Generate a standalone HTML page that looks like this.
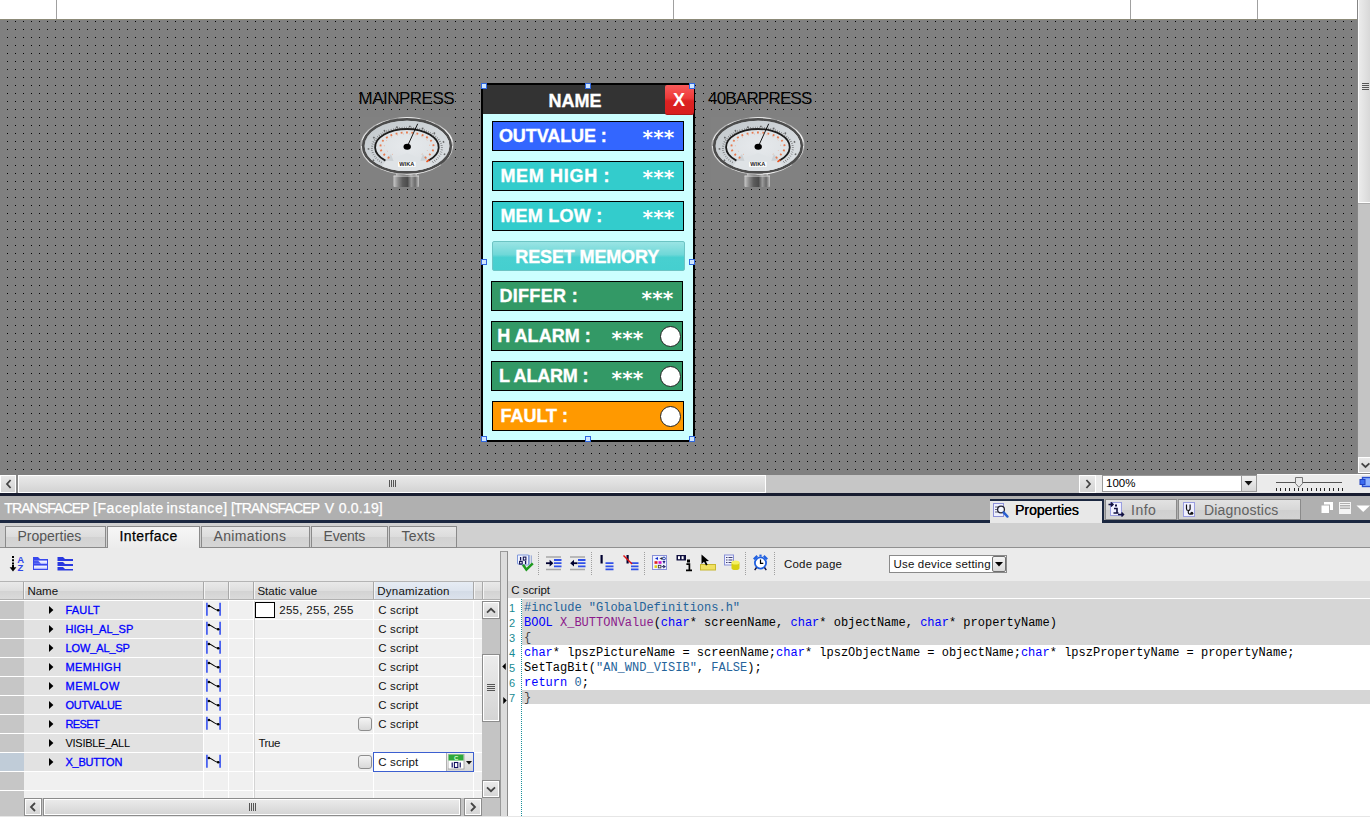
<!DOCTYPE html>
<html><head><meta charset="utf-8"><title>TRANSFACEP</title>
<style>
*{box-sizing:border-box;margin:0;padding:0}
html,body{width:1370px;height:817px;overflow:hidden;background:#fff;font-family:"Liberation Sans",sans-serif;font-size:12px;color:#000}
.a{position:absolute}
#top{left:0;top:0;width:1370px;height:20px;background:#fff}
#top i{position:absolute;top:0;width:1px;height:19px;background:#a0a0a0}
#canvas{left:0;top:20px;width:1357px;height:455px;background-color:#000;
 background-image:linear-gradient(90deg,#808080 7px,rgba(0,0,0,0) 7px),linear-gradient(180deg,#808080 7px,rgba(0,0,0,0) 7px);background-size:8px 8px;background-position:0 2px}
#vsb{left:1357px;top:0;width:13px;height:475px;background:#c8c8c8}
#hsb{left:0;top:475px;width:1370px;height:18px;background:#c6c6c6}
#navy1{left:0;top:493px;width:1370px;height:3px;background:#181d30}
#titlebar{left:0;top:496px;width:1370px;height:24px;background:#b0b0b0;color:#fff;font-size:14px;line-height:24px;white-space:nowrap}
#navy2{left:0;top:520px;width:1370px;height:3px;background:#1b2740}
#tabstrip{left:0;top:523px;width:1370px;height:25px;background:#d0d0d0;border-bottom:1px solid #909090}
#lower{left:0;top:548px;width:1370px;height:269px;background:#ebebeb}

.lbl{font-size:17px;line-height:20px;color:#000;white-space:nowrap}
#fp{left:481px;top:83px;width:214px;height:359px;background:#ccffff;border:2px solid #000}
#fpt{-webkit-text-stroke:0.35px #fff;left:0;top:0;width:210px;height:29px;background:#333;color:#fff;font-weight:bold;font-size:18px;line-height:28px;text-align:center}
#xb{left:182px;top:0;width:29px;height:29px;text-indent:-1px;border-radius:2px;background:linear-gradient(180deg,#f85a5a 0%,#ee3a3a 45%,#dc2222 55%,#d81f1f 100%);color:#fff;font-weight:bold;font-size:18px;line-height:30px;text-align:center;box-shadow:0 1px 0 #b01818}
.row{left:9px;width:192px;height:30px;border:1px solid #000;color:#fff;font-weight:bold;font-size:18px;line-height:29px;white-space:nowrap}
.row span{position:absolute;top:0;-webkit-text-stroke:0.35px #fff}
.row span.st{-webkit-text-stroke:0;font-family:"DejaVu Sans",sans-serif;font-size:20px;letter-spacing:0.2px;line-height:28px;top:2px;margin-left:-0.5px}
.lamp{position:absolute;width:21px;height:21px;border-radius:50%;background:#fff;border:1px solid #222;top:4px;margin-left:-1px}
.h{position:absolute;width:6px;height:6px;background:#cfe6ff;border:1px solid #3068e0}

.sbb{position:absolute;border:1px solid #fff;background:linear-gradient(180deg,#e9e9e9,#d3d3d3)}
.tab{position:absolute;top:3px;height:22px;border:1px solid #8a8a8a;background:linear-gradient(180deg,#e6e6e6 0%,#dcdcdc 50%,#d2d2d2 51%,#d6d6d6 100%);color:#555;font-size:14px;line-height:19px;text-align:left;padding-left:11.5px;white-space:nowrap}
.tab.on{background:linear-gradient(180deg,#f6f6f6,#ebebeb);color:#000;height:23px;border-bottom:none;font-weight:normal}

.rtab{position:absolute;top:3px;height:21px;border:1px solid #8a8a8a;background:linear-gradient(180deg,#e2e2e2 0%,#d8d8d8 50%,#cfcfcf 51%,#d3d3d3 100%);color:#606060;font-size:14px;line-height:19px;white-space:nowrap}
.rtab span,.ptab span{position:absolute;top:0}
.ptab{z-index:5;position:absolute;left:990px;top:3px;width:114px;height:24px;background:#e8e8e8;border-top:2px solid #1b2740;border-right:2px solid #1b2740;color:#000;font-size:14px;line-height:20px;white-space:nowrap}
#ttl b{position:absolute;top:0;font-weight:normal;-webkit-text-stroke:0.25px #fff}

.hd{background:linear-gradient(180deg,#e9e9e9 0%,#dedede 50%,#d3d3d3 55%,#dadada 100%)}
.ht{top:35px;font-size:11.5px;line-height:17px;white-space:nowrap;color:#111}
.nm{font-size:11px;line-height:18px;white-space:nowrap}
.nm.b{-webkit-text-stroke:0.3px #0000ff}
.cs{font-size:11.5px;line-height:18px;white-space:nowrap;color:#111;letter-spacing:0.15px}
.sb2{border:1px solid #8c8c8c;box-shadow:inset 0 0 0 1px #fff;background:linear-gradient(180deg,#ececec,#d4d4d4)}

.ln{font-size:11px;line-height:15px;color:#178a92;white-space:pre}
.cd{font-family:"Liberation Mono",monospace;font-size:12px;line-height:15px;color:#000;white-space:pre}
.cd i{font-style:normal}
.cd .k{color:#0000ff}.cd .s{color:#25639a}.cd .f{color:#8b1a8b}.cd .g{color:#444}
</style></head><body>
<div id="top" class="a"><i style="left:56px"></i><i style="left:673px"></i><i style="left:1130px"></i><i style="left:1257px"></i><i style="left:1357px"></i><div class="a" style="left:0;top:19px;width:1358px;height:1px;background:#8c8a78"></div></div>
<div id="canvas" class="a"></div>

<div class="a lbl" id="l1" style="left:358.5px;top:89px;letter-spacing:-0.5px">MAINPRESS</div>
<div class="a lbl" id="l2" style="left:708px;top:89px;letter-spacing:-0.8px">40BARPRESS</div>
<svg class="a" style="left:360px;top:117px" width="94" height="71" viewBox="0 0 94 71">
<defs>
<linearGradient id="rim1" x1="0" y1="0" x2="1" y2="0.55"><stop offset="0" stop-color="#9c9c9c"/><stop offset="0.1" stop-color="#f6f6f6"/><stop offset="0.24" stop-color="#8c8c8c"/><stop offset="0.42" stop-color="#e4e4e4"/><stop offset="0.58" stop-color="#7e7e7e"/><stop offset="0.78" stop-color="#dedede"/><stop offset="0.9" stop-color="#f0f0f0"/><stop offset="1" stop-color="#8a8a8a"/></linearGradient>
<linearGradient id="ring1" x1="0" y1="0" x2="1" y2="1"><stop offset="0" stop-color="#c2c8cc"/><stop offset="0.5" stop-color="#d0d5d9"/><stop offset="1" stop-color="#dde1e4"/></linearGradient>
<radialGradient id="face1" cx="0.5" cy="0.5" r="0.6"><stop offset="0" stop-color="#e6e9ec"/><stop offset="1" stop-color="#dce0e3"/></radialGradient>
<linearGradient id="stem1" x1="0" y1="0" x2="1" y2="0"><stop offset="0" stop-color="#c8c8c8"/><stop offset="0.18" stop-color="#8a8a8a"/><stop offset="0.36" stop-color="#5c5c5c"/><stop offset="0.55" stop-color="#4c4c4c"/><stop offset="0.7" stop-color="#9a9a9a"/><stop offset="0.85" stop-color="#6a6a6a"/><stop offset="1" stop-color="#c4c4c4"/></linearGradient>
<clipPath id="fc1"><ellipse cx="47" cy="28.9" rx="42.4" ry="25.2"/></clipPath>
</defs>
<rect width="94" height="71" fill="#818181"/>
<rect x="36" y="54" width="21" height="5" fill="url(#stem1)"/>
<rect x="33.5" y="58.5" width="25.5" height="11.5" rx="1" fill="url(#stem1)"/>
<rect x="33.5" y="58.5" width="25.5" height="1.2" fill="#d4d4d4" opacity="0.8"/>
<ellipse cx="47" cy="28.9" rx="46.7" ry="28.9" fill="url(#rim1)"/>
<ellipse cx="47" cy="28.9" rx="45.6" ry="28" fill="none" stroke="#fff" stroke-width="1" stroke-dasharray="14 9 22 6 9 12" opacity="0.75"/>
<ellipse cx="47" cy="28.9" rx="43.8" ry="26.5" fill="none" stroke="#4c4c4c" stroke-width="2.6"/>
<ellipse cx="47" cy="28.9" rx="42.4" ry="25.2" fill="url(#ring1)"/>
<g clip-path="url(#fc1)">
<ellipse cx="46.9" cy="28.8" rx="31.8" ry="18.2" fill="url(#face1)"/>
<path d="M46.9,36 L25,44.5 L18,56 L76,56 L69,44.5 Z" fill="#dfe3e6"/>
<path d="M25.4,43.6 L33.5,44 L31,37 Z M68.4,43.6 L60.3,44 L62.8,37 Z" fill="#cdd2d6"/>
</g>
<path d="M21.6,45.5 A35,20.6 0 1 1 72.2,45.5" fill="none" stroke="#2c2c2c" stroke-width="2" stroke-dasharray="0.45 1.75" opacity="0.8"/>
<path d="M14,44 A38.5,22.8 0 1 1 80,44" fill="none" stroke="#3a3a3a" stroke-width="1.6" stroke-dasharray="1.6 11.2" opacity="0.7"/>
<path d="M25.4,43.6 A31.8,18.2 0 1 1 68.4,43.6" fill="none" stroke="#1c1c1c" stroke-width="1.8"/>
<path d="M29.4,41 A26.6,14.6 0 1 1 64.6,41" fill="none" stroke="#e8622c" stroke-width="1.9" stroke-dasharray="1.8 3.4" opacity="0.8"/>
<path d="M32.8,37.5 A22.6,11.6 0 1 1 61.2,37.5" fill="none" stroke="#ee8a5c" stroke-width="1" stroke-dasharray="0.8 5.3" opacity="0.6"/>
<path d="M66.5,44.8 L69.4,42.6" stroke="#e8501c" stroke-width="1.6"/>
<path d="M38,11.8h18" stroke="#555" stroke-width="0.5" stroke-dasharray="1 0.6" opacity="0.7"/>
<line x1="47.3" y1="29.5" x2="57.7" y2="6.8" stroke="#000" stroke-width="0.9"/>
<ellipse cx="47.2" cy="29.8" rx="3.7" ry="3" fill="#000"/>
<rect x="38" y="44.8" width="17.6" height="5" fill="#fff"/>
<text x="46.8" y="49.2" font-family="Liberation Sans, sans-serif" font-weight="bold" font-size="5.2" text-anchor="middle" fill="#222" textLength="15" lengthAdjust="spacingAndGlyphs">WIKA</text>
</svg>
<svg class="a" style="left:711px;top:117px" width="94" height="71" viewBox="0 0 94 71">
<defs>
<linearGradient id="rim2" x1="0" y1="0" x2="1" y2="0.55"><stop offset="0" stop-color="#9c9c9c"/><stop offset="0.1" stop-color="#f6f6f6"/><stop offset="0.24" stop-color="#8c8c8c"/><stop offset="0.42" stop-color="#e4e4e4"/><stop offset="0.58" stop-color="#7e7e7e"/><stop offset="0.78" stop-color="#dedede"/><stop offset="0.9" stop-color="#f0f0f0"/><stop offset="1" stop-color="#8a8a8a"/></linearGradient>
<linearGradient id="ring2" x1="0" y1="0" x2="1" y2="1"><stop offset="0" stop-color="#c2c8cc"/><stop offset="0.5" stop-color="#d0d5d9"/><stop offset="1" stop-color="#dde1e4"/></linearGradient>
<radialGradient id="face2" cx="0.5" cy="0.5" r="0.6"><stop offset="0" stop-color="#e6e9ec"/><stop offset="1" stop-color="#dce0e3"/></radialGradient>
<linearGradient id="stem2" x1="0" y1="0" x2="1" y2="0"><stop offset="0" stop-color="#c8c8c8"/><stop offset="0.18" stop-color="#8a8a8a"/><stop offset="0.36" stop-color="#5c5c5c"/><stop offset="0.55" stop-color="#4c4c4c"/><stop offset="0.7" stop-color="#9a9a9a"/><stop offset="0.85" stop-color="#6a6a6a"/><stop offset="1" stop-color="#c4c4c4"/></linearGradient>
<clipPath id="fc2"><ellipse cx="47" cy="28.9" rx="42.4" ry="25.2"/></clipPath>
</defs>
<rect width="94" height="71" fill="#818181"/>
<rect x="36" y="54" width="21" height="5" fill="url(#stem2)"/>
<rect x="33.5" y="58.5" width="25.5" height="11.5" rx="1" fill="url(#stem2)"/>
<rect x="33.5" y="58.5" width="25.5" height="1.2" fill="#d4d4d4" opacity="0.8"/>
<ellipse cx="47" cy="28.9" rx="46.7" ry="28.9" fill="url(#rim2)"/>
<ellipse cx="47" cy="28.9" rx="45.6" ry="28" fill="none" stroke="#fff" stroke-width="1" stroke-dasharray="14 9 22 6 9 12" opacity="0.75"/>
<ellipse cx="47" cy="28.9" rx="43.8" ry="26.5" fill="none" stroke="#4c4c4c" stroke-width="2.6"/>
<ellipse cx="47" cy="28.9" rx="42.4" ry="25.2" fill="url(#ring2)"/>
<g clip-path="url(#fc2)">
<ellipse cx="46.9" cy="28.8" rx="31.8" ry="18.2" fill="url(#face2)"/>
<path d="M46.9,36 L25,44.5 L18,56 L76,56 L69,44.5 Z" fill="#dfe3e6"/>
<path d="M25.4,43.6 L33.5,44 L31,37 Z M68.4,43.6 L60.3,44 L62.8,37 Z" fill="#cdd2d6"/>
</g>
<path d="M21.6,45.5 A35,20.6 0 1 1 72.2,45.5" fill="none" stroke="#2c2c2c" stroke-width="2" stroke-dasharray="0.45 1.75" opacity="0.8"/>
<path d="M14,44 A38.5,22.8 0 1 1 80,44" fill="none" stroke="#3a3a3a" stroke-width="1.6" stroke-dasharray="1.6 11.2" opacity="0.7"/>
<path d="M25.4,43.6 A31.8,18.2 0 1 1 68.4,43.6" fill="none" stroke="#1c1c1c" stroke-width="1.8"/>
<path d="M29.4,41 A26.6,14.6 0 1 1 64.6,41" fill="none" stroke="#e8622c" stroke-width="1.9" stroke-dasharray="1.8 3.4" opacity="0.8"/>
<path d="M32.8,37.5 A22.6,11.6 0 1 1 61.2,37.5" fill="none" stroke="#ee8a5c" stroke-width="1" stroke-dasharray="0.8 5.3" opacity="0.6"/>
<path d="M66.5,44.8 L69.4,42.6" stroke="#e8501c" stroke-width="1.6"/>
<path d="M38,11.8h18" stroke="#555" stroke-width="0.5" stroke-dasharray="1 0.6" opacity="0.7"/>
<line x1="47.3" y1="29.5" x2="57.7" y2="6.8" stroke="#000" stroke-width="0.9"/>
<ellipse cx="47.2" cy="29.8" rx="3.7" ry="3" fill="#000"/>
<rect x="38" y="44.8" width="17.6" height="5" fill="#fff"/>
<text x="46.8" y="49.2" font-family="Liberation Sans, sans-serif" font-weight="bold" font-size="5.2" text-anchor="middle" fill="#222" textLength="15" lengthAdjust="spacingAndGlyphs">WIKA</text>
</svg>
<div id="fp" class="a">
 <div id="fpt" class="a"><span style="position:relative;left:-13px;top:2px;letter-spacing:0px">NAME</span></div>
 <div id="xb" class="a">X</div>
 <div class="a row" style="top:36px;background:#3366ff"><span style="left:5.9px;letter-spacing:-0.08px">OUTVALUE :</span><span class="st" style="left:150px;top:1px">***</span></div>
 <div class="a row" style="top:76px;background:#33cccc"><span style="left:7.4px;letter-spacing:0.68px">MEM HIGH :</span><span class="st" style="left:150px;top:1px">***</span></div>
 <div class="a row" style="top:116px;background:#33cccc"><span style="left:7.4px;letter-spacing:0.24px">MEM LOW :</span><span class="st" style="left:150px;top:1px">***</span></div>
 <div class="a" id="rst" style="left:9px;top:156px;width:193px;height:30px;border-radius:2px;border:1px solid #6cc4c4;background:linear-gradient(180deg,#9ae4e4 0%,#6fd8d8 45%,#48d0d0 55%,#45cfcf 100%);color:#fff;font-weight:bold;font-size:18px;line-height:29px;text-align:center;text-indent:-2.6px;letter-spacing:-0.14px;padding-top:1px;-webkit-text-stroke:0.35px #fff">RESET MEMORY</div>
 <div class="a row" style="left:8px;top:196px;background:#339966"><span style="left:7.4px;letter-spacing:0.32px">DIFFER :</span><span class="st" style="left:150px">***</span></div>
 <div class="a row" style="left:8px;top:236px;background:#339966"><span style="left:5.2px;letter-spacing:0.03px">H ALARM :</span><span class="st" style="left:120px">***</span><i class="lamp" style="left:169px"></i></div>
 <div class="a row" style="left:8px;top:276px;background:#339966"><span style="left:7px;letter-spacing:-0.19px">L ALARM :</span><span class="st" style="left:120px">***</span><i class="lamp" style="left:169px"></i></div>
 <div class="a row" style="top:316px;background:#ff9900"><span style="left:7.5px;letter-spacing:-0.03px">FAULT :</span><i class="lamp" style="left:168px"></i></div>
</div>
<i class="h" style="left:481px;top:83px"></i><i class="h" style="left:585px;top:83px"></i><i class="h" style="left:689px;top:83px"></i>
<i class="h" style="left:481px;top:259px"></i><i class="h" style="left:689px;top:259px"></i>
<i class="h" style="left:481px;top:436px"></i><i class="h" style="left:585px;top:436px"></i><i class="h" style="left:689px;top:436px"></i>
<div id="vsb" class="a">
 <div class="a" style="left:0;top:0;width:1px;height:474px;background:#858585"></div>
 <div class="a" style="left:1px;top:0;width:12px;height:203px;border-left:1px solid #fff;border-bottom:1px solid #fff;background:linear-gradient(90deg,#ebebeb,#d8d8d8)"></div>
 <div class="a" style="left:5px;top:83px;width:7px;height:8px;background:repeating-linear-gradient(180deg,#555 0,#555 1px,rgba(0,0,0,0) 1px,rgba(0,0,0,0) 2px)"></div>
 <div class="a" style="left:1px;top:203px;width:12px;height:1px;background:#aaa"></div>
 <div class="a" style="left:1px;top:204px;width:12px;height:253px;background:#c4c4c4"></div>
 <div class="a" style="left:1px;top:457px;width:12px;height:16px;border:1px solid #fff;border-right:none;background:linear-gradient(180deg,#e9e9e9,#d6d6d6)"></div>
 <svg class="a" style="left:4px;top:462px" width="9" height="7" viewBox="0 0 9 7"><path d="M0.6,1.4 L4.5,5 L8.4,1.4" fill="none" stroke="#444" stroke-width="1.8"/></svg>
 <div class="a" style="left:0;top:473px;width:13px;height:1px;background:#888"></div>
 <div class="a" style="left:0;top:474px;width:13px;height:1px;background:#fff"></div>
</div>
<div id="hsb" class="a">
 <div class="sbb" style="left:0;top:0;width:16px;height:18px"></div>
 <svg class="a" style="left:5px;top:4px" width="8" height="10" viewBox="0 0 8 10"><path d="M5.6,1 L2,5 L5.6,9" fill="none" stroke="#444" stroke-width="1.8"/></svg>
 <div class="a" style="left:16px;top:0;width:2px;height:18px;background:#8a8a8a"></div>
 <div class="sbb" style="left:18px;top:0;width:748px;height:18px"></div>
 <div class="a" style="left:389px;top:5px;width:7px;height:7px;background:repeating-linear-gradient(90deg,#555 0,#555 1px,rgba(0,0,0,0) 1px,rgba(0,0,0,0) 2px)"></div>
 <div class="sbb" style="left:1079px;top:0;width:17px;height:18px"></div>
 <svg class="a" style="left:1084px;top:4px" width="8" height="10" viewBox="0 0 8 10"><path d="M2.4,1 L6,5 L2.4,9" fill="none" stroke="#444" stroke-width="1.8"/></svg>
 <div class="a" style="left:1096px;top:0;width:274px;height:18px;background:#ebebeb"></div>
 <div class="a" style="left:1257px;top:-1px;width:100px;height:19px;background:#ebebeb;border-top:1px solid #fafafa"></div>
 <div class="a" style="left:1102px;top:0;width:155px;height:17px;background:#fff;border:1px solid #9a9a9a;font-size:11.5px;line-height:15px;padding-left:3px">100%</div>
 <div class="a" style="left:1241px;top:1px;width:15px;height:15px;background:linear-gradient(180deg,#f2f2f2,#d6d6d6);border-left:1px solid #9a9a9a"></div>
 <svg class="a" style="left:1244px;top:6px" width="9" height="5" viewBox="0 0 9 5"><path d="M0.5,0 L8.5,0 L4.5,4.6 Z" fill="#111"/></svg>
 <div class="a" style="left:1276px;top:7px;width:66px;height:1px;background:#555"></div>
 <div class="a" style="left:1276px;top:13px;width:67px;height:3px;background:repeating-linear-gradient(90deg,#222 0,#222 1px,rgba(0,0,0,0) 1px,rgba(0,0,0,0) 4.4px)"></div>
 <svg class="a" style="left:1295px;top:2px" width="8" height="11" viewBox="0 0 8 11"><path d="M0.5,0.5 L7.5,0.5 L7.5,6.5 L4,10.3 L0.5,6.5 Z" fill="#e8e8e8" stroke="#777" stroke-width="1"/></svg>
 <svg class="a" style="left:1359px;top:1px" width="12" height="12" viewBox="0 0 12 12"><rect x="3.5" y="1.5" width="9" height="9" fill="#8fb4ff" stroke="#2a4fd0" stroke-width="1.4"/><rect x="1" y="3.5" width="5" height="5" fill="#3c6cf0" stroke="#2040c0" stroke-width="1"/></svg>
</div>
<div id="navy1" class="a"></div>
<div id="titlebar" class="a"><span id="ttl" class="a" style="left:0;top:0"><b style="left:4.3px;letter-spacing:-0.9px">TRANSFACEP</b><b style="left:93px;letter-spacing:0.55px">[Faceplate</b><b style="left:166.4px;letter-spacing:0.59px">instance]</b><b style="left:231px;letter-spacing:-0.82px">[TRANSFACEP</b><b style="left:324.7px">V</b><b style="left:338.7px;letter-spacing:0.21px">0.0.19]</b></span>
 <div class="ptab"><span id="tprop" style="left:25px;top:0;line-height:19px;text-shadow:0.2px 0 0 #000">Properties</span>
  <svg class="a" style="left:3px;top:2px" width="17" height="16" viewBox="0 0 17 16"><rect x="0.5" y="0.5" width="10" height="13" fill="#eef0ff" stroke="#8c90d8"/><path d="M2,4h3M2,6.5h2.5M2,9h3" stroke="#667" stroke-width="1"/><circle cx="8" cy="6.5" r="3.4" fill="#f4f7ff" stroke="#223" stroke-width="1.3"/><path d="M10.6,9.4 L14.5,13.6" stroke="#2a5fd0" stroke-width="2.4" stroke-linecap="round"/></svg>
 </div>
 <div class="rtab" style="left:1105px;width:72px"><span id="tinfo" style="left:25px;top:1px;letter-spacing:0.5px">Info</span>
  <svg class="a" style="left:2px;top:1px" width="17" height="17" viewBox="0 0 17 17"><rect x="2.5" y="1.5" width="11" height="13" fill="#f0f0ff" stroke="#9a9ee0"/><path d="M0.5,3.5h4M3,1.5l2,2l-2,2" fill="none" stroke="#101040" stroke-width="1.5"/><path d="M10,13.5h5M13.5,11.5l2,2l-2,2" fill="none" stroke="#101040" stroke-width="1.5"/><rect x="7" y="3.5" width="2" height="2" fill="#101040"/><path d="M6,7.5h3v4.5M5.5,12h5" fill="none" stroke="#101040" stroke-width="1.6"/></svg>
 </div>
 <div class="rtab" style="left:1178px;width:123px"><span id="tdiag" style="left:25px;top:1px;letter-spacing:0.2px">Diagnostics</span>
  <svg class="a" style="left:4px;top:2px" width="13" height="16" viewBox="0 0 13 16"><rect x="0.5" y="0.5" width="11" height="14" fill="#f0f0ff" stroke="#9a9ee0"/><path d="M3.5,2.5v4.2a1.8,1.8 0 0 0 3.6,0v-4.2" fill="none" stroke="#111" stroke-width="1.2"/><path d="M5.3,8.6v2a1.6,1.6 0 0 0 2.6,1.2" fill="none" stroke="#111" stroke-width="1.2"/><circle cx="8.8" cy="11.2" r="1.5" fill="#111"/></svg>
 </div>
 <svg class="a" style="left:1321px;top:6px" width="12" height="12" viewBox="0 0 12 12"><rect x="3" y="0" width="9" height="8" fill="#fff"/><rect x="0" y="3" width="8.5" height="8.5" fill="#fff" stroke="#b0b0b0" stroke-width="1"/></svg>
 <svg class="a" style="left:1339px;top:6px" width="12" height="12" viewBox="0 0 12 12"><rect x="0.5" y="0.5" width="11" height="11" fill="none" stroke="#f4f4f4"/><path d="M1,2.5h10M1,5h10M1,7.5h10" stroke="#f4f4f4" stroke-width="1"/><rect x="1" y="8" width="10" height="3" fill="#f4f4f4"/></svg>
 <svg class="a" style="left:1356px;top:9px" width="14" height="8" viewBox="0 0 14 8"><path d="M0.5,0.5 L14,0.5 L7.2,7 Z" fill="#fff"/></svg>
</div>
<div id="navy2" class="a"></div>
<div id="tabstrip" class="a">
 <div class="tab" style="left:5px;width:101px"><span id="t1">Properties</span></div>
 <div class="tab on" style="left:107px;width:93px"><span id="t2" style="letter-spacing:0.4px;-webkit-text-stroke:0.25px #000">Interface</span></div>
 <div class="tab" style="left:201px;width:109px"><span id="t3" style="letter-spacing:0.35px">Animations</span></div>
 <div class="tab" style="left:311px;width:77px"><span id="t4" style="letter-spacing:-0.2px">Events</span></div>
 <div class="tab" style="left:389px;width:68px"><span id="t5" style="letter-spacing:0.2px">Texts</span></div>
</div>
<div id="lower" class="a"></div>
<!--LEFT-->
<div id="ltb" class="a" style="left:0;top:548px;width:500px;height:269px;background:#ebebeb">
<svg class="a" style="left:9px;top:7px" width="18" height="18" viewBox="0 0 18 18"><path d="M4,1v2M4,4.2v2M4,7.4v2" stroke="#000" stroke-width="2"/><path d="M4,10v4" stroke="#000" stroke-width="2"/><path d="M0.6,12.2 L4,16.6 L7.4,12.2 Z" fill="#000"/><text x="8.3" y="8" font-family="Liberation Sans, sans-serif" font-weight="bold" font-size="9.5" fill="#3048e8">A</text><text x="8.6" y="16.2" font-family="Liberation Sans, sans-serif" font-weight="bold" font-size="9.5" fill="#3048e8">Z</text></svg>
<svg class="a" style="left:32px;top:8px" width="17" height="15" viewBox="0 0 17 15"><defs><linearGradient id="fg" x1="0" y1="0" x2="0" y2="1"><stop offset="0" stop-color="#fff"/><stop offset="1" stop-color="#c8d0ff"/></linearGradient></defs><path d="M1,1h5l2,2h8v11h-15z" fill="#3848ee"/><rect x="2" y="4.6" width="13" height="3.2" fill="url(#fg)"/><rect x="2" y="9.6" width="13" height="3.2" fill="url(#fg)"/><path d="M2,4.6h4l3,3.2h-7z" fill="#4858f0"/></svg>
<svg class="a" style="left:57px;top:8px" width="17" height="15" viewBox="0 0 17 15"><path d="M0.5,1h5.5l2,2h8v2h-15.5z M0.5,6h5.5l2,2h8v2h-15.5z M0.5,11h5.5l2,2h8v1.6h-15.5z" fill="#2838e0"/></svg>
<div class="a" style="left:0;top:33px;width:500px;height:1px;background:#b4b4b4"></div>
<div class="a hd" style="left:0;top:34px;width:500px;height:17px"></div>
<div class="a" style="left:0;top:51px;width:500px;height:1px;background:#b0b0b0"></div>
<div class="a" style="left:0;top:52px;width:500px;height:1px;background:#fff"></div>
<div class="a" style="left:374px;top:34px;width:99px;height:17px;background:linear-gradient(180deg,#e6ecf4 0%,#dde4ee 50%,#d3dbe6 51%,#dbe2ec 100%)"></div>
<div class="a" style="left:23px;top:34px;width:1px;height:17px;background:#a8a8a8"></div><div class="a" style="left:24px;top:34px;width:1px;height:17px;background:#f4f4f4"></div>
<div class="a" style="left:203px;top:34px;width:1px;height:17px;background:#a8a8a8"></div><div class="a" style="left:204px;top:34px;width:1px;height:17px;background:#f4f4f4"></div>
<div class="a" style="left:228px;top:34px;width:1px;height:17px;background:#a8a8a8"></div><div class="a" style="left:229px;top:34px;width:1px;height:17px;background:#f4f4f4"></div>
<div class="a" style="left:253px;top:34px;width:1px;height:17px;background:#a8a8a8"></div><div class="a" style="left:254px;top:34px;width:1px;height:17px;background:#f4f4f4"></div>
<div class="a" style="left:373px;top:34px;width:1px;height:17px;background:#a8a8a8"></div><div class="a" style="left:374px;top:34px;width:1px;height:17px;background:#f4f4f4"></div>
<div class="a" style="left:473px;top:34px;width:1px;height:17px;background:#a8a8a8"></div><div class="a" style="left:474px;top:34px;width:1px;height:17px;background:#f4f4f4"></div>
<div class="a" style="left:482px;top:34px;width:1px;height:17px;background:#a8a8a8"></div><div class="a" style="left:483px;top:34px;width:1px;height:17px;background:#f4f4f4"></div>
<span class="a ht" style="left:27.4px;letter-spacing:0">Name</span><span class="a ht" style="left:257.4px;letter-spacing:0.02px">Static value</span><span class="a ht" style="left:377.3px;letter-spacing:0.23px">Dynamization</span>
<div class="a" style="left:0;top:53px;width:24px;height:18px;background:#c6c6c6"></div>
<div class="a" style="left:24px;top:53px;width:179px;height:18px;background:#e2e2e2"></div>
<div class="a" style="left:204px;top:53px;width:278px;height:18px;background:#f0f0f0"></div>
<div class="a" style="left:0;top:71px;width:482px;height:1px;background:#fff"></div>
<svg class="a" style="left:49px;top:58px" width="5" height="8" viewBox="0 0 5 8"><path d="M0,0 L4.4,4 L0,8 Z" fill="#000"/></svg>
<span class="a nm b" style="left:65.5px;top:53px;letter-spacing:0.19px;color:#0000ff">FAULT</span>
<svg class="a" style="left:205px;top:54px" width="18" height="15" viewBox="0 0 18 15"><path d="M1.9,0.8v13M15.1,0.8v13" stroke="#4a62f0" stroke-width="1.8"/><path d="M3.5,4 C7,3.6 9,8.6 13.5,8.2" fill="none" stroke="#000" stroke-width="1.1"/><circle cx="3.9" cy="4" r="1.3" fill="#000"/><circle cx="13.2" cy="8.3" r="1.3" fill="#000"/></svg>
<span class="a cs" style="left:378.2px;top:53px">C script</span>
<div class="a" style="left:0;top:72px;width:24px;height:18px;background:#c6c6c6"></div>
<div class="a" style="left:24px;top:72px;width:179px;height:18px;background:#e2e2e2"></div>
<div class="a" style="left:204px;top:72px;width:278px;height:18px;background:#f0f0f0"></div>
<div class="a" style="left:0;top:90px;width:482px;height:1px;background:#fff"></div>
<svg class="a" style="left:49px;top:77px" width="5" height="8" viewBox="0 0 5 8"><path d="M0,0 L4.4,4 L0,8 Z" fill="#000"/></svg>
<span class="a nm b" style="left:65.5px;top:72px;letter-spacing:-0.01px;color:#0000ff">HIGH_AL_SP</span>
<svg class="a" style="left:205px;top:73px" width="18" height="15" viewBox="0 0 18 15"><path d="M1.9,0.8v13M15.1,0.8v13" stroke="#4a62f0" stroke-width="1.8"/><path d="M3.5,4 C7,3.6 9,8.6 13.5,8.2" fill="none" stroke="#000" stroke-width="1.1"/><circle cx="3.9" cy="4" r="1.3" fill="#000"/><circle cx="13.2" cy="8.3" r="1.3" fill="#000"/></svg>
<span class="a cs" style="left:378.2px;top:72px">C script</span>
<div class="a" style="left:0;top:91px;width:24px;height:18px;background:#c6c6c6"></div>
<div class="a" style="left:24px;top:91px;width:179px;height:18px;background:#e2e2e2"></div>
<div class="a" style="left:204px;top:91px;width:278px;height:18px;background:#f0f0f0"></div>
<div class="a" style="left:0;top:109px;width:482px;height:1px;background:#fff"></div>
<svg class="a" style="left:49px;top:96px" width="5" height="8" viewBox="0 0 5 8"><path d="M0,0 L4.4,4 L0,8 Z" fill="#000"/></svg>
<span class="a nm b" style="left:65.5px;top:91px;letter-spacing:-0.12px;color:#0000ff">LOW_AL_SP</span>
<svg class="a" style="left:205px;top:92px" width="18" height="15" viewBox="0 0 18 15"><path d="M1.9,0.8v13M15.1,0.8v13" stroke="#4a62f0" stroke-width="1.8"/><path d="M3.5,4 C7,3.6 9,8.6 13.5,8.2" fill="none" stroke="#000" stroke-width="1.1"/><circle cx="3.9" cy="4" r="1.3" fill="#000"/><circle cx="13.2" cy="8.3" r="1.3" fill="#000"/></svg>
<span class="a cs" style="left:378.2px;top:91px">C script</span>
<div class="a" style="left:0;top:110px;width:24px;height:18px;background:#c6c6c6"></div>
<div class="a" style="left:24px;top:110px;width:179px;height:18px;background:#e2e2e2"></div>
<div class="a" style="left:204px;top:110px;width:278px;height:18px;background:#f0f0f0"></div>
<div class="a" style="left:0;top:128px;width:482px;height:1px;background:#fff"></div>
<svg class="a" style="left:49px;top:115px" width="5" height="8" viewBox="0 0 5 8"><path d="M0,0 L4.4,4 L0,8 Z" fill="#000"/></svg>
<span class="a nm b" style="left:65.5px;top:110px;letter-spacing:0.38px;color:#0000ff">MEMHIGH</span>
<svg class="a" style="left:205px;top:111px" width="18" height="15" viewBox="0 0 18 15"><path d="M1.9,0.8v13M15.1,0.8v13" stroke="#4a62f0" stroke-width="1.8"/><path d="M3.5,4 C7,3.6 9,8.6 13.5,8.2" fill="none" stroke="#000" stroke-width="1.1"/><circle cx="3.9" cy="4" r="1.3" fill="#000"/><circle cx="13.2" cy="8.3" r="1.3" fill="#000"/></svg>
<span class="a cs" style="left:378.2px;top:110px">C script</span>
<div class="a" style="left:0;top:129px;width:24px;height:18px;background:#c6c6c6"></div>
<div class="a" style="left:24px;top:129px;width:179px;height:18px;background:#e2e2e2"></div>
<div class="a" style="left:204px;top:129px;width:278px;height:18px;background:#f0f0f0"></div>
<div class="a" style="left:0;top:147px;width:482px;height:1px;background:#fff"></div>
<svg class="a" style="left:49px;top:134px" width="5" height="8" viewBox="0 0 5 8"><path d="M0,0 L4.4,4 L0,8 Z" fill="#000"/></svg>
<span class="a nm b" style="left:65.5px;top:129px;letter-spacing:0.63px;color:#0000ff">MEMLOW</span>
<svg class="a" style="left:205px;top:130px" width="18" height="15" viewBox="0 0 18 15"><path d="M1.9,0.8v13M15.1,0.8v13" stroke="#4a62f0" stroke-width="1.8"/><path d="M3.5,4 C7,3.6 9,8.6 13.5,8.2" fill="none" stroke="#000" stroke-width="1.1"/><circle cx="3.9" cy="4" r="1.3" fill="#000"/><circle cx="13.2" cy="8.3" r="1.3" fill="#000"/></svg>
<span class="a cs" style="left:378.2px;top:129px">C script</span>
<div class="a" style="left:0;top:148px;width:24px;height:18px;background:#c6c6c6"></div>
<div class="a" style="left:24px;top:148px;width:179px;height:18px;background:#e2e2e2"></div>
<div class="a" style="left:204px;top:148px;width:278px;height:18px;background:#f0f0f0"></div>
<div class="a" style="left:0;top:166px;width:482px;height:1px;background:#fff"></div>
<svg class="a" style="left:49px;top:153px" width="5" height="8" viewBox="0 0 5 8"><path d="M0,0 L4.4,4 L0,8 Z" fill="#000"/></svg>
<span class="a nm b" style="left:65.5px;top:148px;letter-spacing:-0.3px;color:#0000ff">OUTVALUE</span>
<svg class="a" style="left:205px;top:149px" width="18" height="15" viewBox="0 0 18 15"><path d="M1.9,0.8v13M15.1,0.8v13" stroke="#4a62f0" stroke-width="1.8"/><path d="M3.5,4 C7,3.6 9,8.6 13.5,8.2" fill="none" stroke="#000" stroke-width="1.1"/><circle cx="3.9" cy="4" r="1.3" fill="#000"/><circle cx="13.2" cy="8.3" r="1.3" fill="#000"/></svg>
<span class="a cs" style="left:378.2px;top:148px">C script</span>
<div class="a" style="left:0;top:167px;width:24px;height:18px;background:#c6c6c6"></div>
<div class="a" style="left:24px;top:167px;width:179px;height:18px;background:#e2e2e2"></div>
<div class="a" style="left:204px;top:167px;width:278px;height:18px;background:#f0f0f0"></div>
<div class="a" style="left:0;top:185px;width:482px;height:1px;background:#fff"></div>
<svg class="a" style="left:49px;top:172px" width="5" height="8" viewBox="0 0 5 8"><path d="M0,0 L4.4,4 L0,8 Z" fill="#000"/></svg>
<span class="a nm b" style="left:65.5px;top:167px;letter-spacing:-0.6px;color:#0000ff">RESET</span>
<svg class="a" style="left:205px;top:168px" width="18" height="15" viewBox="0 0 18 15"><path d="M1.9,0.8v13M15.1,0.8v13" stroke="#4a62f0" stroke-width="1.8"/><path d="M3.5,4 C7,3.6 9,8.6 13.5,8.2" fill="none" stroke="#000" stroke-width="1.1"/><circle cx="3.9" cy="4" r="1.3" fill="#000"/><circle cx="13.2" cy="8.3" r="1.3" fill="#000"/></svg>
<span class="a cs" style="left:378.2px;top:167px">C script</span>
<div class="a" style="left:0;top:186px;width:24px;height:18px;background:#c6c6c6"></div>
<div class="a" style="left:24px;top:186px;width:179px;height:18px;background:#e2e2e2"></div>
<div class="a" style="left:204px;top:186px;width:278px;height:18px;background:#f0f0f0"></div>
<div class="a" style="left:0;top:204px;width:482px;height:1px;background:#fff"></div>
<svg class="a" style="left:49px;top:191px" width="5" height="8" viewBox="0 0 5 8"><path d="M0,0 L4.4,4 L0,8 Z" fill="#000"/></svg>
<span class="a nm" style="left:65.5px;top:186px;letter-spacing:-0.27px;color:#000">VISIBLE_ALL</span>
<div class="a" style="left:0;top:205px;width:24px;height:18px;background:#c0ccd8"></div>
<div class="a" style="left:24px;top:205px;width:179px;height:18px;background:#e2e2e2"></div>
<div class="a" style="left:204px;top:205px;width:278px;height:18px;background:#f0f0f0"></div>
<div class="a" style="left:0;top:223px;width:482px;height:1px;background:#fff"></div>
<svg class="a" style="left:49px;top:210px" width="5" height="8" viewBox="0 0 5 8"><path d="M0,0 L4.4,4 L0,8 Z" fill="#000"/></svg>
<span class="a nm b" style="left:65.5px;top:205px;letter-spacing:-0.23px;color:#0000ff">X_BUTTON</span>
<svg class="a" style="left:205px;top:206px" width="18" height="15" viewBox="0 0 18 15"><path d="M1.9,0.8v13M15.1,0.8v13" stroke="#4a62f0" stroke-width="1.8"/><path d="M3.5,4 C7,3.6 9,8.6 13.5,8.2" fill="none" stroke="#000" stroke-width="1.1"/><circle cx="3.9" cy="4" r="1.3" fill="#000"/><circle cx="13.2" cy="8.3" r="1.3" fill="#000"/></svg>
<div class="a" style="left:0;top:224px;width:24px;height:18px;background:#c6c6c6"></div>
<div class="a" style="left:24px;top:224px;width:179px;height:18px;background:#f0f0f0"></div>
<div class="a" style="left:204px;top:224px;width:278px;height:18px;background:#f0f0f0"></div>
<div class="a" style="left:0;top:242px;width:482px;height:1px;background:#fff"></div>
<div class="a" style="left:0;top:243px;width:24px;height:7px;background:#c6c6c6"></div>
<div class="a" style="left:24px;top:243px;width:179px;height:7px;background:#f0f0f0"></div>
<div class="a" style="left:204px;top:243px;width:278px;height:7px;background:#f0f0f0"></div>
<div class="a" style="left:203px;top:53px;width:1px;height:197px;background:#fff"></div>
<div class="a" style="left:228px;top:53px;width:1px;height:197px;background:#fff"></div>
<div class="a" style="left:253px;top:53px;width:1px;height:197px;background:#fff"></div>
<div class="a" style="left:373px;top:53px;width:1px;height:197px;background:#fff"></div>
<div class="a" style="left:473px;top:53px;width:1px;height:197px;background:#fff"></div>
<div class="a" style="left:254px;top:53px;width:1px;height:197px;background:#d4d4d4"></div>
<div class="a" style="left:255px;top:54px;width:20px;height:16px;background:#fff;border:1px solid #000"></div>
<span class="a cs" style="left:279.2px;top:53px;letter-spacing:0.32px">255, 255, 255</span>
<span class="a cs" style="left:258.4px;top:186px;letter-spacing:-0.4px">True</span>
<div class="a" style="left:358px;top:169px;width:14px;height:14px;border:1px solid #8e8e8e;border-radius:3px;background:linear-gradient(180deg,#f4f4f4,#d9d9d9)"></div>
<div class="a" style="left:358px;top:207px;width:14px;height:14px;border:1px solid #8e8e8e;border-radius:3px;background:linear-gradient(180deg,#f4f4f4,#d9d9d9)"></div>
<div class="a" style="left:373px;top:204px;width:101px;height:20px;border:1px solid #3c5fd0;background:#fff"></div>
<span class="a cs" style="left:378.2px;top:205px">C script</span>
<div class="a" style="left:446px;top:205px;width:27px;height:18px;background:linear-gradient(180deg,#f0f0f0,#d6d6d6);border-left:1px solid #b0b0b0"></div>
<svg class="a" style="left:448px;top:206px" width="17" height="16" viewBox="0 0 17 16"><rect x="0" y="0" width="16" height="15" fill="#fff" stroke="#9a9a9a" stroke-width="0.8"/><rect x="0.5" y="0.5" width="15" height="6" fill="#2ea83a"/><text x="6" y="5.8" font-family="Liberation Sans, sans-serif" font-weight="bold" font-size="6" fill="#d8ffd8">C</text><path d="M4.2,8.5v5M12.2,8.5v5" stroke="#101060" stroke-width="1.2"/><rect x="6.4" y="8.5" width="3.4" height="5" fill="none" stroke="#101060" stroke-width="1.1"/></svg>
<svg class="a" style="left:466px;top:213px" width="6" height="4" viewBox="0 0 6 4"><path d="M0,0h6l-3,3.6z" fill="#111"/></svg>
<div class="a" style="left:482px;top:53px;width:18px;height:197px;background:#c4c4c4"></div>
<div class="a sb2" style="left:482px;top:53px;width:18px;height:18px"></div>
<svg class="a" style="left:486px;top:59px" width="10" height="7" viewBox="0 0 10 7"><path d="M1,5.6 L5,1.8 L9,5.6" fill="none" stroke="#444" stroke-width="1.8"/></svg>
<div class="a sb2" style="left:482px;top:106px;width:18px;height:68px"></div>
<div class="a" style="left:487px;top:136px;width:8px;height:7px;background:repeating-linear-gradient(180deg,#555 0,#555 1px,rgba(0,0,0,0) 1px,rgba(0,0,0,0) 2px)"></div>
<div class="a sb2" style="left:482px;top:232px;width:18px;height:18px"></div>
<svg class="a" style="left:486px;top:238px" width="10" height="7" viewBox="0 0 10 7"><path d="M1,1.4 L5,5.2 L9,1.4" fill="none" stroke="#444" stroke-width="1.8"/></svg>
<div class="a" style="left:0;top:250px;width:24px;height:19px;background:#c6c6c6"></div>
<div class="a" style="left:24px;top:250px;width:458px;height:18px;background:#c4c4c4"></div>
<div class="a sb2" style="left:24px;top:250px;width:18px;height:18px"></div>
<svg class="a" style="left:29px;top:254px" width="8" height="10" viewBox="0 0 8 10"><path d="M6,1 L2,5 L6,9" fill="none" stroke="#444" stroke-width="1.8"/></svg>
<div class="a sb2" style="left:43px;top:250px;width:418px;height:18px"></div>
<div class="a" style="left:249px;top:255px;width:7px;height:8px;background:repeating-linear-gradient(90deg,#555 0,#555 1px,rgba(0,0,0,0) 1px,rgba(0,0,0,0) 2px)"></div>
<div class="a sb2" style="left:464px;top:250px;width:18px;height:18px"></div>
<svg class="a" style="left:469px;top:254px" width="8" height="10" viewBox="0 0 8 10"><path d="M2,1 L6,5 L2,9" fill="none" stroke="#444" stroke-width="1.8"/></svg>
<div class="a" style="left:482px;top:250px;width:18px;height:19px;background:#c4c4c4"></div>
<div class="a" style="left:0;top:268px;width:500px;height:1px;background:#e0e0e0"></div>
</div>
<!--/LEFT-->
<!--RIGHT-->
<div class="a" style="left:500px;top:551px;width:8px;height:266px;background:#dcdcdc;border-left:1px solid #9a9a9a;border-right:1px solid #8c8c8c;border-top:1px solid #9a9a9a"></div>
<svg class="a" style="left:502px;top:663px" width="4" height="7" viewBox="0 0 4 8"><path d="M4,0 L0,4 L4,8 Z" fill="#000"/></svg>
<svg class="a" style="left:503px;top:697px" width="4" height="7" viewBox="0 0 4 8"><path d="M0,0 L4,4 L0,8 Z" fill="#000"/></svg>
<div id="rp" class="a" style="left:508px;top:548px;width:862px;height:269px;background:#ebebeb">
<div class="a" style="left:30px;top:4px;width:1px;height:24px;background:repeating-linear-gradient(180deg,#a0a0a0 0,#a0a0a0 1px,rgba(0,0,0,0) 1px,rgba(0,0,0,0) 2px)"></div>
<div class="a" style="left:83px;top:4px;width:1px;height:24px;background:repeating-linear-gradient(180deg,#a0a0a0 0,#a0a0a0 1px,rgba(0,0,0,0) 1px,rgba(0,0,0,0) 2px)"></div>
<div class="a" style="left:136px;top:4px;width:1px;height:24px;background:repeating-linear-gradient(180deg,#a0a0a0 0,#a0a0a0 1px,rgba(0,0,0,0) 1px,rgba(0,0,0,0) 2px)"></div>
<div class="a" style="left:237px;top:4px;width:1px;height:24px;background:repeating-linear-gradient(180deg,#a0a0a0 0,#a0a0a0 1px,rgba(0,0,0,0) 1px,rgba(0,0,0,0) 2px)"></div>
<div class="a" style="left:266px;top:4px;width:1px;height:24px;background:repeating-linear-gradient(180deg,#a0a0a0 0,#a0a0a0 1px,rgba(0,0,0,0) 1px,rgba(0,0,0,0) 2px)"></div>
<svg class="a" style="left:9px;top:6px" width="17" height="18" viewBox="0 0 17 18"><path d="M0.5,1h11v10h-5.5l-5.5,-1.2z" fill="#f2f5ff" stroke="#7f98dc" stroke-width="1"/><path d="M12.6,1v9.6M14.4,1.4v8" stroke="#8fa2d4" stroke-width="0.9"/><path d="M3.6,3v3.4M8.6,7v3.2" stroke="#101050" stroke-width="1.3"/><rect x="6.3" y="3.1" width="2.6" height="3" fill="none" stroke="#101050" stroke-width="1.1"/><rect x="2.6" y="7.4" width="2.6" height="2.6" fill="none" stroke="#101050" stroke-width="1.1"/><path d="M6,10.8 L9.4,15.6 L15.8,9.4" fill="none" stroke="#1f9a1f" stroke-width="2.5"/></svg>
<svg class="a" style="left:38px;top:8px" width="16" height="15" viewBox="0 0 16 15"><path d="M0,1h15M0,13.5h15" stroke="#a8a8a8" stroke-width="1.6"/><path d="M8,4h7.5M8,7.2h7.5M8,10.4h7.5" stroke="#3050e8" stroke-width="1.8"/><path d="M0,7.2h5" stroke="#000030" stroke-width="1.8"/><path d="M3.6,3.8 L7.4,7.2 L3.6,10.6 Z" fill="#000030"/></svg>
<svg class="a" style="left:62px;top:8px" width="16" height="15" viewBox="0 0 16 15"><path d="M0,1h15M0,13.5h15" stroke="#a8a8a8" stroke-width="1.6"/><path d="M8,4h7.5M8,7.2h7.5M8,10.4h7.5" stroke="#3050e8" stroke-width="1.8"/><path d="M2.5,7.2h5" stroke="#000030" stroke-width="1.8"/><path d="M4,3.8 L0.2,7.2 L4,10.6 Z" fill="#000030"/></svg>
<svg class="a" style="left:92px;top:7px" width="14" height="16" viewBox="0 0 14 16"><path d="M1.6,0v8.5" stroke="#000030" stroke-width="2.2"/><path d="M5.5,8.2h8M5.5,11.3h8M5.5,14.4h8" stroke="#3050e8" stroke-width="1.8"/></svg>
<svg class="a" style="left:115px;top:7px" width="16" height="16" viewBox="0 0 16 16"><path d="M4.6,0v8.5" stroke="#000030" stroke-width="2.2"/><path d="M8,8.2h7.5M8,11.3h7.5M8,14.4h7.5" stroke="#3050e8" stroke-width="1.8"/><path d="M0.5,0.5 L9,9" stroke="#e01010" stroke-width="1.4"/></svg>
<svg class="a" style="left:144px;top:7px" width="16" height="16" viewBox="0 0 16 16"><rect x="0.5" y="0.5" width="14" height="14" fill="#f0f2ff" stroke="#8890d8"/><path d="M3,3.5l3,-1.5v3z" fill="#1030d0"/><path d="M7.5,3.5l3,-1.5v3z" fill="#303030"/><circle cx="12" cy="3.5" r="1.4" fill="none" stroke="#1030a0" stroke-width="0.9"/><rect x="2.5" y="6.2" width="3" height="2.6" fill="#e02020"/><rect x="6.5" y="6.2" width="3" height="2.6" fill="#d010d0"/><path d="M10.5,6h3l-1.5,3z" fill="#202080"/><rect x="2.5" y="10.3" width="2.6" height="2.6" fill="#e0d010"/><rect x="6.3" y="10.3" width="2.6" height="2.6" fill="none" stroke="#303030" stroke-width="0.8"/><path d="M9.6,11.6h3.6M11,10.2l2.4,1.4l-2.4,1.4" fill="none" stroke="#202060" stroke-width="0.9"/></svg>
<svg class="a" style="left:168px;top:6px" width="17" height="18" viewBox="0 0 17 18"><rect x="0.5" y="1" width="9.5" height="5.5" fill="#101040"/><rect x="2" y="2.2" width="2" height="3" fill="#fff"/><rect x="5.6" y="2.2" width="2" height="3" fill="#fff"/><rect x="11" y="5.5" width="3" height="3" fill="#000"/><path d="M10.4,10.2h3v6M10,16.4h6" fill="none" stroke="#000" stroke-width="1.7"/></svg>
<svg class="a" style="left:192px;top:6px" width="16" height="17" viewBox="0 0 16 17"><rect x="0.5" y="10.5" width="15" height="5.5" fill="#f0e060" stroke="#c8b830"/><path d="M1.5,0.5 L1.5,10 L4,7.8 L6,11.5 L7.6,10.7 L5.8,7.2 L9,7 Z" fill="#000"/></svg>
<svg class="a" style="left:216px;top:6px" width="16" height="17" viewBox="0 0 16 17"><rect x="0.5" y="1" width="9" height="10" fill="#f0f2ff" stroke="#8890d8"/><path d="M2,3.5h1.5M4.5,3.5h4M2,6h1.5M4.5,6h4M2,8.5h1.5M4.5,8.5h4" stroke="#404070" stroke-width="1"/><path d="M7.5,8.5v5.5a4,2 0 0 0 8,0v-5.5z" fill="#d8d010"/><ellipse cx="11.5" cy="8.5" rx="4" ry="2" fill="#f4f060"/></svg>
<svg class="a" style="left:244px;top:6px" width="17" height="17" viewBox="0 0 17 17"><path d="M1,4.5 L4.5,1 L6,2.8 L2.6,6 Z M16,4.5 L12.5,1 L11,2.8 L14.4,6 Z" fill="#2060e0"/><circle cx="8.5" cy="9" r="5.6" fill="#fff" stroke="#2060e0" stroke-width="1.8"/><path d="M8.5,5.5v3.8h2.8" fill="none" stroke="#000" stroke-width="1.2"/><path d="M4.5,13.5l-1.8,2.6M12.5,13.5l1.8,2.6" stroke="#101040" stroke-width="1.4"/><rect x="7.4" y="0.6" width="2.2" height="2" fill="#2060e0"/></svg>
<span class="a cs" style="left:276px;top:7px;letter-spacing:0.2px;line-height:18px">Code page</span>
<div class="a" style="left:381px;top:7px;width:118px;height:18px;border:1px solid #8a8a8a;background:#fff;overflow:hidden"><span class="a cs" style="left:3.5px;top:-1px;letter-spacing:0.18px;line-height:18px">Use device setting</span><div class="a" style="left:102px;top:0;width:14px;height:16px;background:linear-gradient(180deg,#f4f4f4,#d8d8d8);border:1px solid #707070;border-radius:2px"></div><svg class="a" style="left:105px;top:6px" width="8" height="5" viewBox="0 0 8 5"><path d="M0,0h8l-4,4.6z" fill="#000"/></svg></div>
<div class="a" style="left:0;top:33px;width:862px;height:17px;background:#dcdcdc"></div>
<span class="a cs" style="left:3.2px;top:33px;letter-spacing:-0.02px;line-height:18px">C script</span>
<div class="a" style="left:0;top:50px;width:862px;height:219px;background:#fff"></div>
<div class="a" style="left:14px;top:51px;width:848px;height:46px;background:#d6d6d6"></div>
<div class="a" style="left:14px;top:142px;width:848px;height:14px;background:#d6d6d6"></div>
<div class="a" style="left:13px;top:51px;width:1px;height:218px;background:repeating-linear-gradient(180deg,#18909a 0,#18909a 1px,#fff 1px,#fff 2px)"></div>
<span class="a ln" style="left:1px;top:53px">1</span><span class="a cd" style="left:16px;top:53px"><i class="s">#include "GlobalDefinitions.h"</i></span>
<span class="a ln" style="left:1px;top:68px">2</span><span class="a cd" style="left:16px;top:68px"><i class="k">BOOL</i> <i class="f">X_BUTTONValue</i>(<i class="k">char</i>* screenName, <i class="k">char</i>* objectName, <i class="k">char</i>* propertyName)</span>
<span class="a ln" style="left:1px;top:83px">3</span><span class="a cd" style="left:16px;top:83px"><i class="g">{</i></span>
<span class="a ln" style="left:1px;top:98px">4</span><span class="a cd" style="left:16px;top:98px"><i class="k">char</i>* lpszPictureName = screenName;<i class="k">char</i>* lpszObjectName = objectName;<i class="k">char</i>* lpszPropertyName = propertyName;</span>
<span class="a ln" style="left:1px;top:113px">5</span><span class="a cd" style="left:16px;top:113px">SetTagBit(<i class="s">"AN_WND_VISIB"</i>, <i class="s">FALSE</i>);</span>
<span class="a ln" style="left:1px;top:128px">6</span><span class="a cd" style="left:16px;top:128px"><i class="k">return</i> <i class="s">0</i>;</span>
<span class="a ln" style="left:1px;top:143px">7</span><span class="a cd" style="left:16px;top:143px"><i class="g">}</i></span>
</div>
<!--/RIGHT-->
<div id="botline" class="a" style="left:0;top:816px;width:1370px;height:1px;background:#e6e6e6;z-index:9"></div>
</body></html>
